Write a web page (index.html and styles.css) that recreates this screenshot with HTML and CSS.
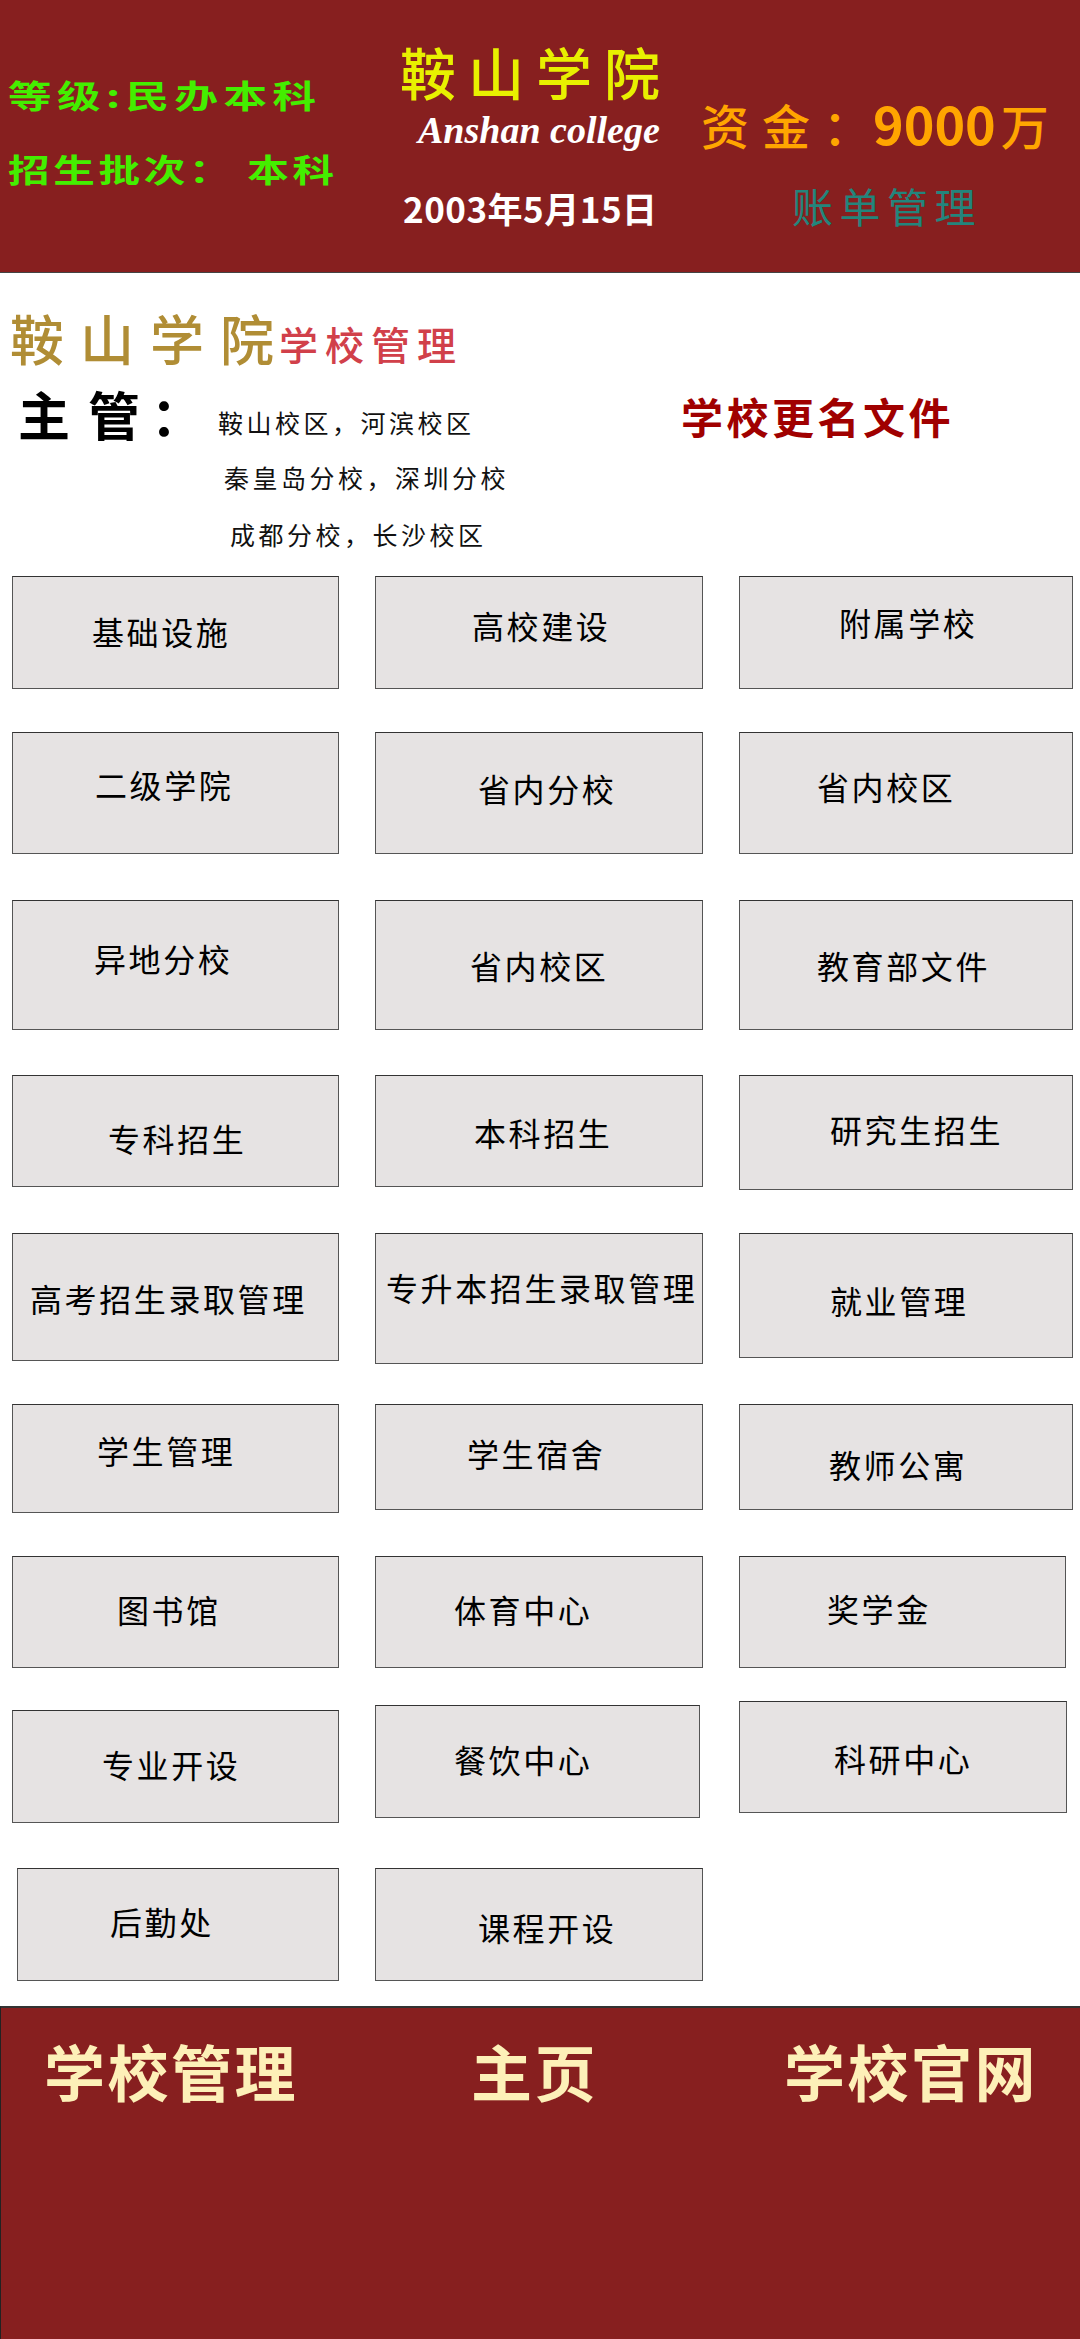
FILE: index.html
```html
<!DOCTYPE html>
<html lang="zh-CN">
<head>
  <meta charset="UTF-8">
  <title>鞍山学院 学校管理</title>
  <link rel="stylesheet" href="styles.css">
</head>
<body>

  <header class="top">
    <div class="top-left">
      <div class="grade">等级:民办本科</div>
      <div class="grade grade-batch">招生批次： 本科</div>
    </div>
    <div class="top-center">
      <div class="brand">鞍山学院</div>
      <div class="brand-en">Anshan college</div>
      <div class="founded">2003年5月15日</div>
    </div>
    <div class="top-right">
      <div class="funds"><span class="funds-label">资金</span><span class="funds-colon">：</span><span class="funds-num">9000</span>万</div>
      <div class="bills">账单管理</div>
    </div>
  </header>

  <section class="intro">
    <div class="intro-title">
      <span class="school">鞍山学院</span>
      <span class="school-sub">学校管理</span>
    </div>
    <div class="intro-body">
      <div class="boss"><span class="boss-first">主</span>管：</div>
      <div class="branches">
        <div class="branch">鞍山校区，河滨校区</div>
        <div class="branch branch-2">秦皇岛分校，深圳分校</div>
        <div class="branch branch-3">成都分校，长沙校区</div>
      </div>
      <div class="rename">学校更名文件</div>
    </div>
  </section>

  <main class="tiles">
    <div class="tile t-jichu">基础设施</div>
    <div class="tile t-gaoxiao">高校建设</div>
    <div class="tile t-fushu">附属学校</div>

    <div class="tile t-erji">二级学院</div>
    <div class="tile t-fenxiao">省内分校</div>
    <div class="tile t-xiaoqu">省内校区</div>

    <div class="tile t-yidi">异地分校</div>
    <div class="tile t-xiaoqu2">省内校区</div>
    <div class="tile t-jiaoyu">教育部文件</div>

    <div class="tile t-zhuanke">专科招生</div>
    <div class="tile t-benke">本科招生</div>
    <div class="tile t-yanjiu">研究生招生</div>

    <div class="tile t-gaokao">高考招生录取管理</div>
    <div class="tile t-zhuansheng">专升本招生录取管理</div>
    <div class="tile t-jiuye">就业管理</div>

    <div class="tile t-xuesheng">学生管理</div>
    <div class="tile t-sushe">学生宿舍</div>
    <div class="tile t-gongyu">教师公寓</div>

    <div class="tile t-tushu">图书馆</div>
    <div class="tile t-tiyu">体育中心</div>
    <div class="tile t-jiang">奖学金</div>

    <div class="tile t-zhuanye">专业开设</div>
    <div class="tile t-canyin">餐饮中心</div>
    <div class="tile t-keyan">科研中心</div>

    <div class="tile t-houqin">后勤处</div>
    <div class="tile t-kecheng">课程开设</div>
  </main>

  <footer class="bottom">
    <div class="nav-item">学校管理</div>
    <div class="nav-item">主页</div>
    <div class="nav-item">学校官网</div>
  </footer>

</body>
</html>
```

FILE: styles.css
```css
body {
  margin: 0;
  width: 1080px;
  height: 2339px;
  overflow: hidden;
  background-color: white;
  font-family: "Noto Sans CJK SC", "Noto Sans", sans-serif;
}

/* top bar */
.top {
  box-sizing: border-box;
  height: 273px;
  display: grid;
  grid-template-columns: 400px 301px 1fr;
  background-color: #871f1f;
  border-bottom: 1px solid #444;
}

.top-left {
  padding: 74px 0 0 8px;
}

.grade {
  height: 40px;
  font-size: 32px;
  line-height: 40px;
  letter-spacing: 4px;
  font-weight: bold;
  color: #44ee00;
  white-space: nowrap;
  transform: scaleX(1.36);
  transform-origin: left center;
}

.grade-batch {
  margin-top: 34px;
  letter-spacing: 2.8px;
  transform: scaleX(1.3);
}

.top-center {
  display: flex;
  flex-direction: column;
}

.brand {
  margin-top: 36px;
  font-size: 56px;
  line-height: 70px;
  letter-spacing: 12px;
  font-weight: 500;
  color: #e8f000;
  white-space: nowrap;
}

.brand-en {
  margin: 2px 0 0 18px;
  font-family: "Liberation Serif", serif;
  font-style: italic;
  font-weight: bold;
  font-size: 38px;
  line-height: 44px;
  color: white;
  white-space: nowrap;
}

.founded {
  margin: 34px 0 0 3px;
  font-size: 35px;
  line-height: 44px;
  letter-spacing: 0.5px;
  font-weight: bold;
  color: white;
  white-space: nowrap;
}

.top-right {
  display: flex;
  flex-direction: column;
}

.funds {
  margin-top: 88px;
  font-size: 48px;
  line-height: 70px;
  font-weight: 500;
  color: #ffa500;
  white-space: nowrap;
}

.funds-label {
  letter-spacing: 13px;
}

.funds-colon {
  margin-right: 2px;
}

.funds-num {
  margin-right: 5px;
  font-size: 52px;
  font-weight: bold;
}

.bills {
  margin: 18px 0 0 91px;
  font-size: 41px;
  line-height: 56px;
  letter-spacing: 6.5px;
  color: #23857c;
  white-space: nowrap;
}

/* school intro */
.intro {
  box-sizing: border-box;
  height: 303px;
  padding: 30px 0 0 10px;
}

.intro-title {
  display: flex;
  align-items: flex-end;
  height: 70px;
}

.school {
  font-size: 54px;
  line-height: 70px;
  letter-spacing: 16px;
  font-weight: 500;
  color: #b08d35;
  white-space: nowrap;
}

.school-sub {
  margin: 0 0 6px -11px;
  font-size: 39px;
  line-height: 48px;
  letter-spacing: 7px;
  font-weight: 500;
  color: #d1404a;
  white-space: nowrap;
}

.intro-body {
  display: flex;
  margin-top: 10px;
}

.boss {
  width: 208px;
  padding-left: 8px;
  box-sizing: border-box;
  font-size: 52px;
  line-height: 62px;
  letter-spacing: 11px;
  font-weight: bold;
  color: black;
  white-space: nowrap;
}

.boss-first {
  letter-spacing: 18px;
}

.branches {
  width: 464px;
  padding-top: 22px;
  display: flex;
  flex-direction: column;
  gap: 21px;
}

.branch {
  font-size: 25px;
  line-height: 34px;
  letter-spacing: 3.5px;
  color: #111;
  white-space: nowrap;
}

.branch-2 {
  padding-left: 6px;
}

.branch-3 {
  padding-left: 12px;
  margin-top: 2px;
}

.rename {
  margin: 3px 0 0 -1px;
  font-size: 42px;
  line-height: 60px;
  letter-spacing: 3.5px;
  font-weight: bold;
  color: #a00000;
  white-space: nowrap;
}

/* tile grid */
.tiles {
  display: grid;
  grid-template-columns: 363px 364px 334px;
  grid-template-rows: 156px 168px 175px 158px 171px 152px 145px 167px 138px;
  padding-left: 12px;
}

.tile {
  box-sizing: border-box;
  width: 327px;
  height: 113px;
  background-color: #e6e3e3;
  border: 1px solid #555;
  border-top-color: #333;
  font-size: 32px;
  line-height: 30px;
  letter-spacing: 2.6px;
  color: black;
  white-space: nowrap;
}

.tile:nth-child(3n+2) {
  width: 328px;
}

.tile:nth-child(3n) {
  width: 334px;
}

.t-jichu { padding: 39px 0 0 79px; }
.t-gaoxiao { padding: 33px 0 0 96px; }
.t-fushu { padding: 30px 0 0 99px; }

.t-erji { height: 122px; padding: 36px 0 0 82px; }
.t-fenxiao { height: 122px; padding: 40px 0 0 102px; }
.t-xiaoqu { height: 122px; padding: 38px 0 0 77px; }

.t-yidi { height: 130px; padding: 42px 0 0 81px; }
.t-xiaoqu2 { height: 130px; padding: 49px 0 0 94px; }
.t-jiaoyu { height: 130px; padding: 49px 0 0 77px; }

.t-zhuanke { height: 112px; padding: 47px 0 0 95px; }
.t-benke { height: 112px; padding: 41px 0 0 98px; }
.t-yanjiu { height: 115px; padding: 38px 0 0 90px; }

.t-gaokao { height: 128px; padding: 49px 0 0 17px; }
.t-zhuansheng { height: 131px; padding: 38px 0 0 10px; }
.t-jiuye { height: 125px; padding: 51px 0 0 90px; }

.t-xuesheng { height: 109px; padding: 30px 0 0 84px; }
.t-sushe { height: 106px; padding: 33px 0 0 91px; }
.t-gongyu { height: 106px; padding: 44px 0 0 89px; }

.t-tushu { height: 112px; padding: 37px 0 0 104px; }
.t-tiyu { height: 112px; padding: 37px 0 0 78px; }
.tile.t-jiang { width: 327px; height: 112px; padding: 36px 0 0 87px; }

.t-zhuanye { margin-top: 9px; padding: 38px 0 0 89px; }
.tile.t-canyin { width: 325px; margin-top: 4px; padding: 38px 0 0 78px; }
.tile.t-keyan { width: 328px; height: 112px; padding: 41px 0 0 94px; }

.tile.t-houqin { width: 322px; margin-left: 5px; padding: 37px 0 0 92px; }
.t-kecheng { padding: 43px 0 0 102px; }

/* bottom bar */
.bottom {
  box-sizing: border-box;
  height: 333px;
  display: grid;
  grid-template-columns: 427px 313px 1fr;
  align-items: start;
  padding: 27px 0 0 43px;
  background-color: #871f1f;
  border-top: 2px solid #333;
  border-left: 1px solid #222;
}

.nav-item {
  font-size: 61px;
  line-height: 72px;
  letter-spacing: 2.5px;
  font-weight: bold;
  color: #fdf0b8;
  white-space: nowrap;
}
```
